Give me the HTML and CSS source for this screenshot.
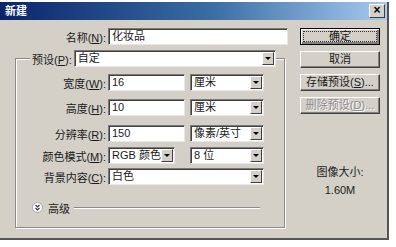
FILE: index.html
```html
<!DOCTYPE html>
<html lang="zh-CN">
<head>
  <meta charset="UTF-8">
  <title>新建</title>
  <link rel="stylesheet" href="styles.css">
</head>
<body>
  <div class="dialog">
    <div class="titlebar">
      <span class="title">新建</span>
      <span class="close">×</span>
    </div>
    <div class="body">
      <div class="main">
        <div class="row">
          <span class="lbl lbl-top">名称(<u>N</u>):</span>
          <div class="field w-name">化妆品</div>
        </div>

        <div class="group">
          <div class="group-head">
            <span class="legend">预设(<u>P</u>):</span>
            <div class="select w-preset"><span class="val">自定</span><span class="arrow"></span></div>
          </div>

          <div class="row r-width">
            <span class="lbl">宽度(<u>W</u>):</span>
            <div class="field w-num">16</div>
            <div class="select w-unit"><span class="val">厘米</span><span class="arrow"></span></div>
          </div>
          <div class="row r-height">
            <span class="lbl">高度(<u>H</u>):</span>
            <div class="field w-num">10</div>
            <div class="select w-unit"><span class="val">厘米</span><span class="arrow"></span></div>
          </div>
          <div class="row r-res">
            <span class="lbl">分辨率(<u>R</u>):</span>
            <div class="field w-num">150</div>
            <div class="select w-unit"><span class="val">像素/英寸</span><span class="arrow"></span></div>
          </div>
          <div class="row r-mode">
            <span class="lbl">颜色模式(<u>M</u>):</span>
            <div class="select w-mode"><span class="val">RGB 颜色</span><span class="arrow"></span></div>
            <div class="select w-unit"><span class="val">8 位</span><span class="arrow"></span></div>
          </div>
          <div class="row r-bg">
            <span class="lbl">背景内容(<u>C</u>):</span>
            <div class="select w-bg"><span class="val">白色</span><span class="arrow"></span></div>
          </div>

          <div class="advanced">
            <svg class="chevron" width="11" height="11" viewBox="0 0 11 11">
              <circle cx="5.5" cy="5.5" r="5" fill="#fff" stroke="#a8a8a8"/>
              <path d="M3.5 3 L5.5 5 L7.5 3 M3.5 6 L5.5 8 L7.5 6" fill="none" stroke="#333" stroke-width="1.2"/>
            </svg>
            <span class="adv-text">高级</span>
            <span class="adv-line"></span>
          </div>
        </div>
      </div>

      <div class="side">
        <div class="btn default"><span class="focus">确定</span></div>
        <div class="btn">取消</div>
        <div class="btn">存储预设(<u>S</u>)...</div>
        <div class="btn disabled">删除预设(<u>D</u>)...</div>
        <div class="info">图像大小:</div>
        <div class="info size">1.60M</div>
      </div>
    </div>
  </div>
</body>
</html>
```

FILE: styles.css
```css
body {
  margin: 0;
  background-color: #fff;
  font-family: "Liberation Sans", "Noto Sans CJK SC", sans-serif;
  font-size: 11px;
  color: #1a1a1a;
}
u {
  text-decoration: underline;
}
.dialog {
  margin-top: 2px;
  width: 387px;
  height: 236px;
  background-color: #d4d0c8;
  border-right: 2px solid #555;
  border-bottom: 2px solid #555;
}
.titlebar {
  height: 18px;
  display: flex;
  align-items: center;
  justify-content: space-between;
  padding: 0 2px 0 5px;
  background: linear-gradient(to right, #0a246a, #3a6ea5 55%, #a6caf0);
}
.title {
  color: #fff;
  font-weight: bold;
  font-size: 11px;
  line-height: 18px;
}
.close {
  width: 14px;
  height: 12px;
  line-height: 11px;
  text-align: center;
  font-weight: bold;
  font-size: 12px;
  color: #000;
  background-color: #d4d0c8;
  border: 1px solid;
  border-color: #fff #404040 #404040 #fff;
}
.body {
  display: flex;
  padding-top: 8px;
}
.main {
  width: 288px;
}
.row {
  display: flex;
  align-items: center;
  height: 17px;
}
.lbl {
  width: 90px;
  margin-right: 2px;
  text-align: right;
  white-space: nowrap;
}
.lbl-top {
  width: 106px;
}
.field, .select {
  box-sizing: border-box;
  height: 17px;
  background-color: #fff;
  border: 1px solid;
  border-color: #7a7a7a #e8e8e8 #e8e8e8 #7a7a7a;
  box-shadow: inset 1px 1px 0 #404040;
  padding-left: 3px;
  line-height: 15px;
  white-space: nowrap;
}
.select {
  display: flex;
  justify-content: space-between;
  padding-right: 1px;
}
.arrow {
  box-sizing: border-box;
  width: 12px;
  height: 13px;
  margin-top: 1px;
  background-color: #d4d0c8;
  border: 1px solid;
  border-color: #fff #404040 #404040 #fff;
  position: relative;
}
.arrow::after {
  content: "";
  position: absolute;
  left: 2px;
  top: 4px;
  border-left: 3px solid transparent;
  border-right: 3px solid transparent;
  border-top: 3px solid #000;
}
.w-name {
  width: 180px;
}
.w-preset {
  width: 202px;
}
.w-num {
  width: 77px;
}
.w-unit {
  width: 74px;
  margin-left: 5px;
}
.w-mode {
  width: 67px;
}
.w-mode + .w-unit {
  margin-left: 15px;
}
.w-bg {
  width: 156px;
}
.group {
  box-sizing: border-box;
  margin: 13px 0 0 15px;
  width: 270px;
  padding-bottom: 14px;
  border: 1px solid #8a8a8a;
  box-shadow: 1px 1px 0 #fff, inset 1px 1px 0 #fff;
}
.group-head {
  display: flex;
  align-items: center;
  height: 17px;
  margin-top: -9px;
}
.legend {
  margin-left: 14px;
  padding: 0 2px;
  background-color: #d4d0c8;
  white-space: nowrap;
}
.r-width {
  margin-top: 7px;
}
.r-height {
  margin-top: 8px;
}
.r-res {
  margin-top: 9px;
}
.r-mode {
  margin-top: 5px;
}
.r-bg {
  margin-top: 4px;
}
.advanced {
  display: flex;
  align-items: center;
  height: 11px;
  margin-top: 17px;
  padding-left: 16px;
}
.adv-text {
  margin-left: 5px;
}
.adv-line {
  width: 186px;
  margin-left: 4px;
  border-top: 1px solid #8a8a8a;
  border-bottom: 1px solid #fff;
}
.side {
  margin-left: 12px;
  width: 80px;
  display: flex;
  flex-direction: column;
  align-items: center;
}
.btn {
  box-sizing: border-box;
  width: 80px;
  height: 17px;
  margin-bottom: 6px;
  text-align: center;
  line-height: 15px;
  border: 1px solid;
  border-color: #fff #404040 #404040 #fff;
  box-shadow: inset -1px -1px 0 #808080;
  white-space: nowrap;
}
.btn.default {
  border: 1px solid #000;
  box-shadow: inset 1px 1px 0 #fff, inset -2px -2px 0 #808080;
  padding: 2px;
}
.focus {
  display: block;
  line-height: 9px;
  height: 11px;
  box-sizing: border-box;
  border: 1px dotted #333;
}
.btn.disabled {
  color: #8a8a8a;
  text-shadow: 1px 1px 0 #fff;
}
.info {
  margin-top: 45px;
  line-height: 14px;
}
.info.size {
  margin-top: 4px;
}
```
